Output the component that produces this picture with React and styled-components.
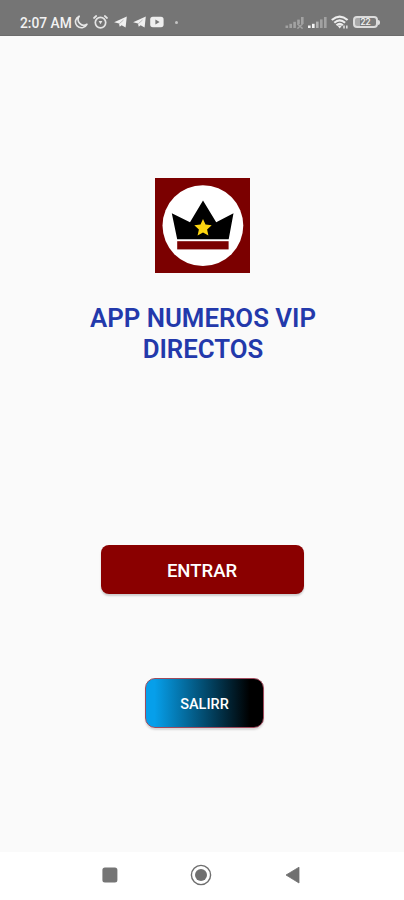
import React from 'react';
import styled, { createGlobalStyle } from 'styled-components';

const App = () => {
  return (
    <Screen>
      <GlobalStyle />
      <StatusBar>
        <StatusGroup>
          <Clock>2:07 AM</Clock>
          <MoonIcon />
          <AlarmIcon />
          <TelegramIcon />
          <TelegramIcon />
          <VideoIcon />
          <Dot />
        </StatusGroup>
        <StatusGroup>
          <NoSignalIcon />
          <SignalIcon />
          <WifiIcon />
          <BatteryIcon />
        </StatusGroup>
      </StatusBar>

      <Main>
        <Logo />
        <Title>
          APP NUMEROS VIP
          <br />
          DIRECTOS
        </Title>
        <EnterButton>ENTRAR</EnterButton>
        <ExitButton>SALIRR</ExitButton>
      </Main>

      <NavBar>
        <NavButton aria-label="recientes">
          <svg width="22" height="22">
            <rect x="3.4" y="3.4" width="15" height="15" rx="2.5" fill="#757575" />
          </svg>
        </NavButton>
        <NavButton aria-label="inicio">
          <svg width="22" height="22">
            <circle cx="11" cy="11" r="9.6" fill="none" stroke="#6e6e6e" strokeWidth="1.4" />
            <circle cx="11" cy="11" r="6" fill="#707070" />
          </svg>
        </NavButton>
        <NavButton aria-label="atras">
          <svg width="22" height="22">
            <path d="M5 11 L18 3.2 V19 Z" fill="#707070" stroke="#707070" strokeWidth="0.8" strokeLinejoin="round" />
          </svg>
        </NavButton>
      </NavBar>
    </Screen>
  );
};

const MoonIcon = () => (
  <Icon width="14" height="14" $left="2px">
    <path d="M5.2 1.2 A6 6 0 1 0 12.9 9.3 A5.7 5.7 0 0 1 5.2 1.2 Z" fill="none" stroke="#e6e6e6" strokeWidth="1.6" strokeLinejoin="round" />
  </Icon>
);

const AlarmIcon = () => (
  <Icon width="15" height="14" $left="5px">
    <g fill="none" stroke="#e4e4e4" strokeWidth="1.7" strokeLinecap="round">
      <circle cx="7.5" cy="7.6" r="5.2" />
      <path d="M1 3 L3.2 1 M14 3 L11.8 1" />
    </g>
    <path d="M5.6 6 H9.4 L7.5 9.2 Z" fill="#e4e4e4" />
  </Icon>
);

const TelegramIcon = () => (
  <Icon width="13" height="12" $left="6px">
    <path d="M0.1 6.2 L12.8 0.6 L11.6 11.4 L7.6 9.2 L5.7 10.8 L5 7.6 Z" fill="#f0f0f0" />
    <path d="M5.3 7.7 L9.5 4" stroke="#a0a0a0" strokeWidth="0.7" />
  </Icon>
);

const VideoIcon = () => (
  <Icon width="14" height="12" $left="4px">
    <rect x="0.2" y="0.8" width="13.4" height="10.4" rx="2.6" fill="#eeeeee" />
    <path d="M5.4 3.6 V8.4 L9.6 6 Z" fill="#777777" />
  </Icon>
);

const NoSignalIcon = () => (
  <Icon width="20" height="13">
    <g fill="#a2a2a2">
      <rect x="0.5" y="9.5" width="2.6" height="2.5" />
      <rect x="4.4" y="7.8" width="2.6" height="4.2" />
      <rect x="8.3" y="5.8" width="2.6" height="6.2" />
      <rect x="12.2" y="3.6" width="2.6" height="4.6" />
      <rect x="16" y="1" width="2.6" height="7" />
    </g>
    <path d="M12.4 8 L17.6 12.6 M17.6 8 L12.4 12.6" stroke="#a2a2a2" strokeWidth="1.4" />
  </Icon>
);

const SignalIcon = () => (
  <Icon width="19" height="13" $left="3px">
    <rect x="0" y="9.5" width="2.6" height="2.5" fill="#f4f4f4" />
    <rect x="4" y="7.8" width="2.6" height="4.2" fill="#f4f4f4" />
    <rect x="8" y="5.6" width="2.6" height="6.4" fill="#b0b0b0" />
    <rect x="12" y="3.4" width="2.6" height="8.6" fill="#a2a2a2" />
    <rect x="16" y="1" width="2.6" height="11" fill="#a2a2a2" />
  </Icon>
);

const WifiIcon = () => (
  <Icon width="18" height="14" $left="4px">
    <g fill="none" stroke="#ededed" strokeWidth="2.2">
      <path d="M0.8 5 Q8.7 -1.8 16.6 5" />
      <path d="M3.3 7.8 Q8.7 3 14.1 7.8" />
      <path d="M5.5 10.3 Q8.7 7.4 11.9 10.3" />
    </g>
    <path d="M6.4 10.6 H11 L8.7 13.6 Z" fill="#ededed" />
    <path d="M13 10.6 V13.4 M15.8 13.4 V10.6" stroke="#dddddd" strokeWidth="1.6" />
  </Icon>
);

const BatteryIcon = () => (
  <Battery>
    <BatteryBody>22</BatteryBody>
    <BatteryTip />
  </Battery>
);

const Logo = () => (
  <LogoBox viewBox="0 0 95 95">
    <rect width="95" height="95" fill="#7b0000" />
    <circle cx="47.9" cy="47.6" r="40.4" fill="#ffffff" />
    <path d="M16.8 35.2 L35 44.3 L48 22.5 L61.2 44.3 L78.5 35.2 L73.7 61.2 H22.2 Z" fill="#000000" />
    <rect x="22.2" y="63.2" width="51.4" height="8.2" fill="#7b0000" />
    <path
      d="M48 40.9 L50.5 46.6 L56.7 47.3 L52.1 51.4 L53.4 57.4 L48 54.4 L42.6 57.4 L43.9 51.4 L39.3 47.3 L45.5 46.6 Z"
      fill="#fcd510"
    />
  </LogoBox>
);

const GlobalStyle = createGlobalStyle`
  * {
    box-sizing: border-box;
  }
  body {
    margin: 0;
    font-family: Roboto, sans-serif;
  }
`;

const Screen = styled.div`
  display: flex;
  flex-direction: column;
  width: 404px;
  height: 900px;
  background: #fafafa;
`;

const StatusBar = styled.header`
  display: flex;
  justify-content: space-between;
  align-items: flex-end;
  height: 36px;
  padding: 0 24px 6px 20px;
  background: #757575;
  border-bottom: 1px solid #6c6c6c;
`;

const StatusGroup = styled.div`
  display: flex;
  align-items: center;
  height: 14px;
`;

const Clock = styled.span`
  width: 52px;
  padding-top: 1px;
  color: #f2f2f2;
  font-size: 13.8px;
  font-weight: 500;
  line-height: 14px;
  white-space: nowrap;
`;

const Icon = styled.svg`
  flex-shrink: 0;
  margin-left: ${(props) => props.$left || 0};
`;

const Dot = styled.span`
  width: 3px;
  height: 3px;
  margin-left: 11px;
  border-radius: 50%;
  background: #c4c4c4;
`;

const Battery = styled.div`
  display: flex;
  align-items: center;
  margin-left: 4px;
`;

const BatteryBody = styled.div`
  width: 25px;
  height: 12px;
  border: 2px solid #dcdcdc;
  border-radius: 4px;
  background: linear-gradient(90deg, #a8a8a8 22%, #7b7b7b 22%);
  color: #f0f0f0;
  font-size: 9px;
  font-weight: 500;
  line-height: 9px;
  text-align: center;
`;

const BatteryTip = styled.div`
  width: 2px;
  height: 5px;
  border-radius: 0 2px 2px 0;
  background: #dedede;
`;

const Main = styled.main`
  display: flex;
  flex: 1;
  flex-direction: column;
  align-items: center;
  padding-top: 142px;
`;

const LogoBox = styled.svg`
  width: 95px;
  height: 95px;
  margin-left: 1px;
`;

const Title = styled.h1`
  margin: 30px 0 0 2px;
  color: #2339ab;
  font-size: 25.8px;
  font-weight: 600;
  line-height: 30.5px;
  text-align: center;
`;

const BaseButton = styled.button`
  border: 0;
  color: #ffffff;
  font-family: inherit;
  font-weight: 500;
  text-align: center;
`;

const EnterButton = styled(BaseButton)`
  width: 203px;
  height: 49px;
  margin: 181px 0 0 0;
  padding: 2px 0 0;
  border-radius: 8px;
  background: #8a0000;
  box-shadow: 0 2px 2px rgba(0, 0, 0, 0.18);
  font-size: 18.5px;
`;

const ExitButton = styled(BaseButton)`
  width: 119px;
  height: 50px;
  margin: 84px 0 0 5px;
  padding: 2px 0 0;
  border: 1px solid #a04a5c;
  border-radius: 10px;
  background: linear-gradient(90deg, #069fea 8%, #000000 88%) border-box;
  box-shadow: 0 2px 2px rgba(0, 0, 0, 0.14);
  font-size: 14.5px;
`;

const NavBar = styled.nav`
  display: flex;
  justify-content: space-between;
  align-items: center;
  height: 48px;
  padding: 0 101px 2px 99px;
  background: #ffffff;
`;

const NavButton = styled.button`
  display: flex;
  padding: 0;
  border: 0;
  background: none;
`;

export default App;
